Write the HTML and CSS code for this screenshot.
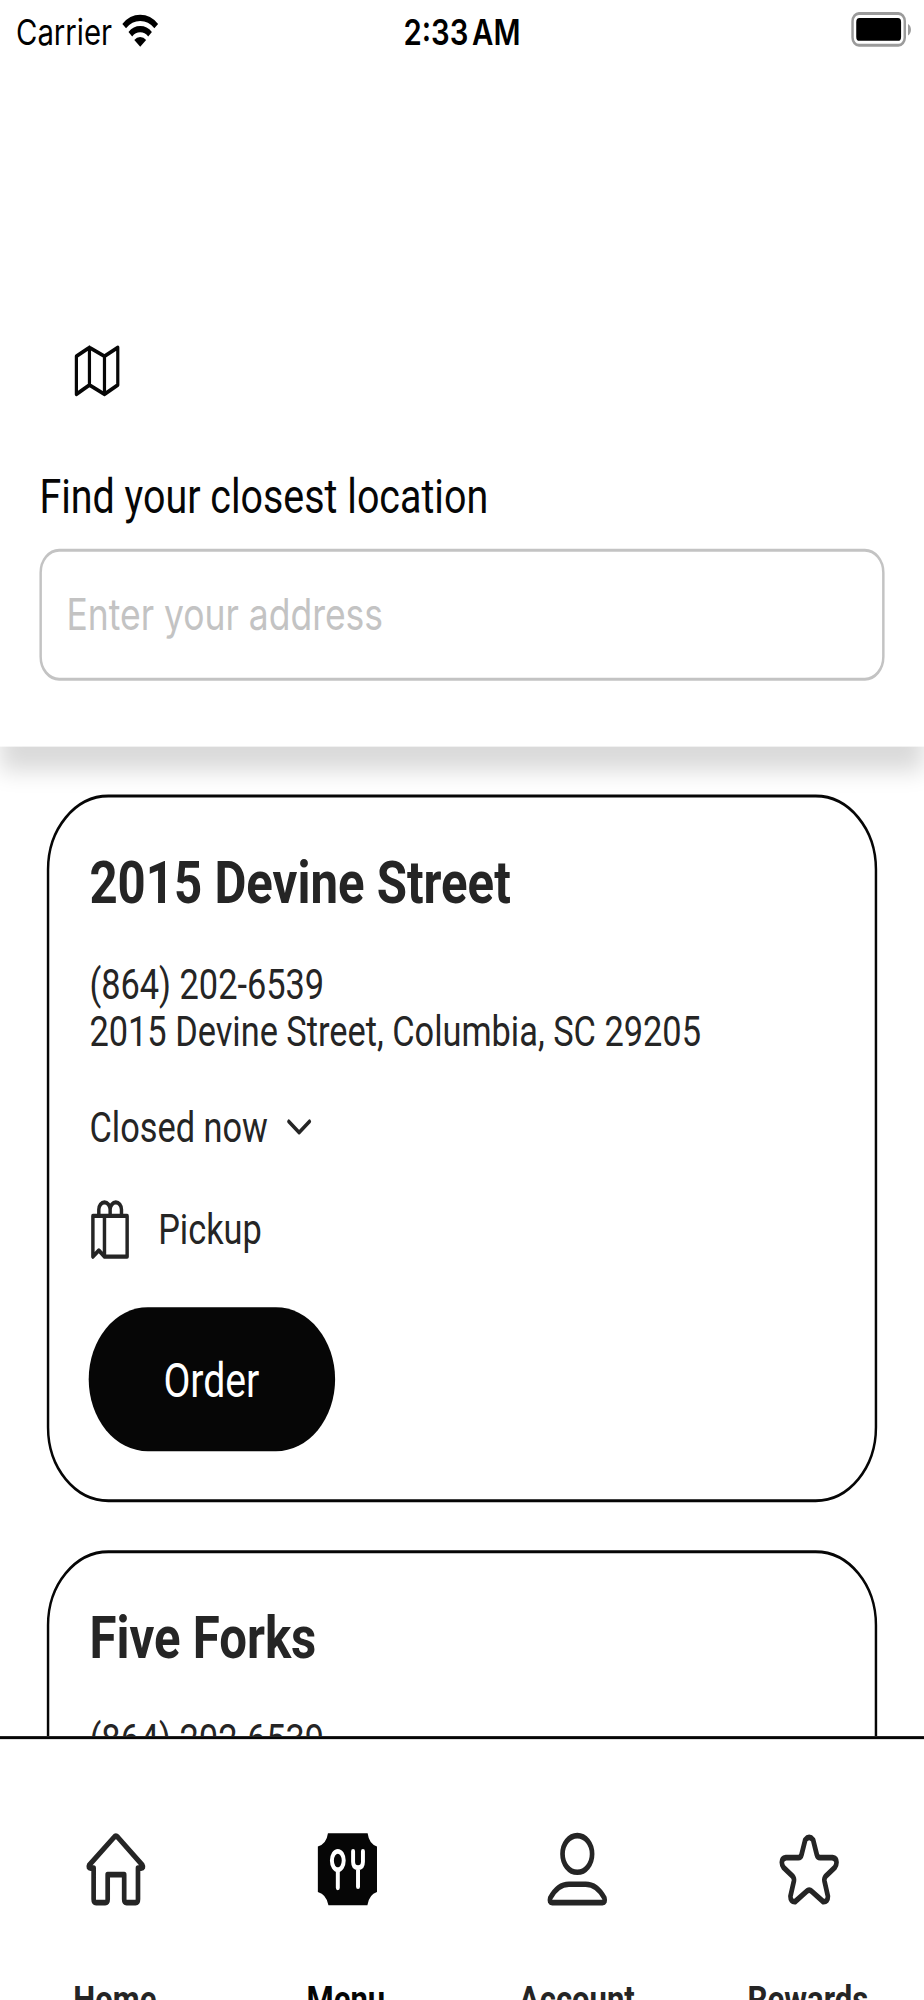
FILE: index.html
```
<!DOCTYPE html>
<html lang="en">
  <head>
    <meta charset="UTF-8" />
    <meta name="viewport" content="width=device-width, initial-scale=1.0" />
    <title>Locations</title>
    <link rel="stylesheet" href="styles.css">
  </head>
  <body>
    <div class="screen">
      <header class="header">
        <div class="status-bar">
          <div class="carrier">
            <span>Carrier</span>
            <svg class="wifi" viewBox="0 -.6 15 11">
              <path d="M1.4 4.1a9.1 9.1 0 0 1 13 0" />
              <path d="M3.9 6.8a5.6 5.6 0 0 1 8 0" />
              <path class="wifi-dot" d="M7.9 11 5.5 8.7a3.4 3.4 0 0 1 4.8 0z" />
            </svg>
          </div>
          <span class="time">2:33 AM</span>
          <svg class="battery" viewBox="0 0 25 12">
            <rect class="battery-case" x="1" y=".5" width="21.2" height="10.6" rx="2.6" />
            <rect x="2.5" y="2" width="18.2" height="7.6" rx="1.3" />
            <path class="battery-tip" d="M23.5 4v3.8c1.6-.6 1.6-3.2 0-3.8z" />
          </svg>
        </div>
        <svg class="map-icon" viewBox="0 0 18 17">
          <path d="M1 3.8 6.3.9l6.1 2.9L17.8.9v12.5l-5.4 3.1-6.1-3.1L1 16.5zM6.3.9v12.5M12.4 3.8v12.7" />
        </svg>
        <label class="search-label" for="address">Find your closest location</label>
        <input class="search-input" type="text" id="address" placeholder="Enter your address" />
      </header>

      <main class="locations">
        <section class="card">
          <h2>2015 Devine Street</h2>
          <p class="contact">
            <span class="phone">(864) 202-6539</span><br />
            <span class="address">2015 Devine Street, Columbia, SC 29205</span>
          </p>
          <div class="hours">
            <span>Closed now</span>
            <svg class="chevron" viewBox="0 0 10 5">
              <path d="M.2 1l4.2 3.7L8.6 1" />
            </svg>
          </div>
          <div class="service">
            <svg class="bag-icon" viewBox="0 0 16 20">
              <path d="M.7 5.5h13.9v13.6H5.4L3.1 17 .7 19.1zM5.4 5.5v13.6" />
              <path d="M3.1 5.5V3.4a2.3 2.4 0 0 1 4.6 0v2.1M7.7 5.5V3.4a2.3 2.4 0 0 1 4.6 0v2.1" />
            </svg>
            <span>Pickup</span>
          </div>
          <button class="order-btn">Order</button>
        </section>

        <section class="card">
          <h2>Five Forks</h2>
          <p class="contact"><span class="phone">(864) 202-6539</span></p>
        </section>
      </main>

      <nav class="tab-bar">
        <a class="tab">
          <svg class="tab-icon" viewBox="0 -.4 24 24">
            <path d="M11.2 1.4 1.2 10.6q-.6 1 .6 1H3V22q0 1.1 1 1.1h3.7q1 0 1-1.1v-8.2h6.7V22q0 1.1 1 1.1H20q1 0 1-1.1V11.6h1.3q1.2 0 .5-1L12.9 1.4q-.9-.8-1.7 0z" />
          </svg>
          <span>Home</span>
        </a>
        <a class="tab active">
          <svg class="tab-icon" viewBox="0 -.4 24 24">
            <path class="plate" d="M4.1 0h16.1q.6 3.6 3.8 4.4v15.2q-3.2.8-3.9 4.4H4.3Q3.5 20.4 0 19.6V4.4Q3.5 3.6 4.1 0z" />
            <ellipse class="cutlery" cx="8.1" cy="9.1" rx="2.4" ry="3.1" />
            <path class="cutlery" d="M8.1 12.2v6M14.3 6v3.5q0 2 2 2t2-2V6M16.3 11.5v6.3" />
          </svg>
          <span>Menu</span>
        </a>
        <a class="tab">
          <svg class="tab-icon" viewBox="0 -.4 24 24">
            <ellipse cx="12.3" cy="6.9" rx="6" ry="6.1" />
            <path d="M1.3 21.6Q4.3 17 8.9 17h6.8q4.6 0 7.6 4.6.5 1.5-.8 1.5H2.1Q.8 23.1 1.3 21.6z" />
          </svg>
          <span>Account</span>
        </a>
        <a class="tab">
          <svg class="tab-icon" viewBox="0 -.4 24 24">
            <path d="M10.8 2.2q1.6-1.7 3.2 0l1.5 4.9q.3 1 1.3 1h5q1.7.2 1.7 1.6 0 1-.7 1.7l-3.7 2.9q-.7.7-.5 1.6l1.4 5.1q0 1.9-1.9 1.8l-4.6-3.4q-1.1-.9-2.2 0l-4.6 3.4q-1.9.1-1.9-1.8l1.4-5.1q.2-.9-.5-1.6l-3.7-2.9q-.7-.7-.7-1.7 0-1.4 1.7-1.6h5q1 0 1.3-1z" />
          </svg>
          <span>Rewards</span>
        </a>
      </nav>
    </div>
  </body>
</html>
```
FILE: styles.css
```
html,
body {
  margin: 0;
  padding: 0;
  height: 100%;
  overflow: hidden;
  background-color: #ffffff;
}
* {
  box-sizing: border-box;
}
svg {
  display: block;
  overflow: visible;
  fill: none;
  stroke: #252525;
  stroke-linecap: round;
  stroke-linejoin: round;
}
.screen {
  width: 375px;
  height: 667px;
  display: flex;
  flex-direction: column;
  overflow: hidden;
  transform: scale(2.464, 2.9985);
  transform-origin: 0 0;
  font-family: Roboto, sans-serif;
  color: #252525;
}
.header {
  height: 249px;
  flex-shrink: 0;
  display: flex;
  flex-direction: column;
  padding: 0 16px;
  background-color: #ffffff;
  box-shadow: 0 8px 8px rgba(0, 0, 0, 0.15);
  z-index: 1;
}
.status-bar {
  height: 20px;
  margin: 0 -16px;
  padding: 0 5px 0 6.5px;
  display: grid;
  grid-template-columns: 1fr auto 1fr;
  align-items: center;
  font-family: Inter, sans-serif;
  font-size: 11.9px;
  line-height: 19px;
  color: #000000;
}
.carrier,
.time {
  padding-top: 0.6px;
}
.carrier {
  display: flex;
  align-items: center;
  gap: 4px;
}
.wifi {
  width: 15px;
  height: 11px;
  margin-bottom: 1px;
  stroke: #000000;
  stroke-width: 2.1;
  stroke-linecap: butt;
}
.wifi-dot {
  fill: #000000;
  stroke: none;
}
.time {
  margin-right: 1.5px;
  font-weight: 600;
  word-spacing: -1.5px;
}
.battery {
  width: 25px;
  height: 12px;
  justify-self: end;
  fill: #000000;
  stroke: none;
}
.battery-case {
  fill: none;
  stroke: #9b9b9b;
}
.battery-tip {
  fill: #9b9b9b;
}
.map-icon {
  width: 18px;
  height: 17px;
  margin: 95px 0 0 14.3px;
  stroke: #060606;
  stroke-width: 1.3;
}
.search-label {
  margin-top: 23.5px;
  font-size: 16px;
  line-height: 20px;
  color: #060606;
}
.search-input {
  width: 343px;
  height: 44px;
  margin-top: 7.5px;
  padding: 0 10px 1px;
  border: 1px solid #c3c3c3;
  border-radius: 8px;
  font-family: Inter, sans-serif;
  font-size: 14.4px;
}
.search-input::placeholder {
  color: #c3c3c3;
}
.locations {
  flex: 1;
  min-height: 0;
  padding: 16px 19.3px 0;
  overflow: hidden;
}
.card {
  height: 236px;
  margin-bottom: 16px;
  padding: 16px 16px 0;
  border: 1px solid #060606;
  border-radius: 25px;
}
.card h2 {
  margin: 0;
  font-size: 19.95px;
  line-height: 24px;
}
.contact {
  margin: 15px 0 0;
  font-size: 13.95px;
  line-height: 15.5px;
}
.hours {
  display: flex;
  align-items: center;
  gap: 8.5px;
  margin-top: 14.5px;
  font-size: 13.95px;
  line-height: 18px;
}
.chevron {
  width: 10px;
  height: 5px;
  stroke-width: 1.3;
}
.service {
  display: flex;
  align-items: center;
  gap: 11.5px;
  margin-top: 15px;
  padding-left: 0.4px;
  font-size: 13.95px;
  line-height: 20px;
}
.bag-icon {
  width: 16px;
  height: 20px;
  stroke-width: 1.4;
}
.order-btn {
  width: 100px;
  height: 48px;
  margin-top: 16.5px;
  padding: 0 1px 0 0;
  border: none;
  border-radius: 24px;
  background-color: #060606;
  color: #ffffff;
  font-family: Roboto, sans-serif;
  font-size: 15.9px;
  cursor: pointer;
}
.tab-bar {
  height: 88px;
  flex-shrink: 0;
  display: grid;
  grid-template-columns: repeat(4, 1fr);
  border-top: 1px solid #060606;
  background-color: #ffffff;
}
.tab {
  display: flex;
  flex-direction: column;
  align-items: center;
  padding-top: 31.4px;
  font-size: 12.6px;
  font-weight: 700;
  line-height: 14px;
}
.tab-icon {
  width: 24px;
  height: 24px;
  margin-bottom: 25px;
  stroke-width: 1.9;
}
.tab span {
  margin-right: 0.5px;
}
.active {
  color: #060606;
}
.plate {
  fill: #060606;
  stroke: none;
}
.cutlery {
  stroke: #ffffff;
  stroke-width: 1.6;
}
```
